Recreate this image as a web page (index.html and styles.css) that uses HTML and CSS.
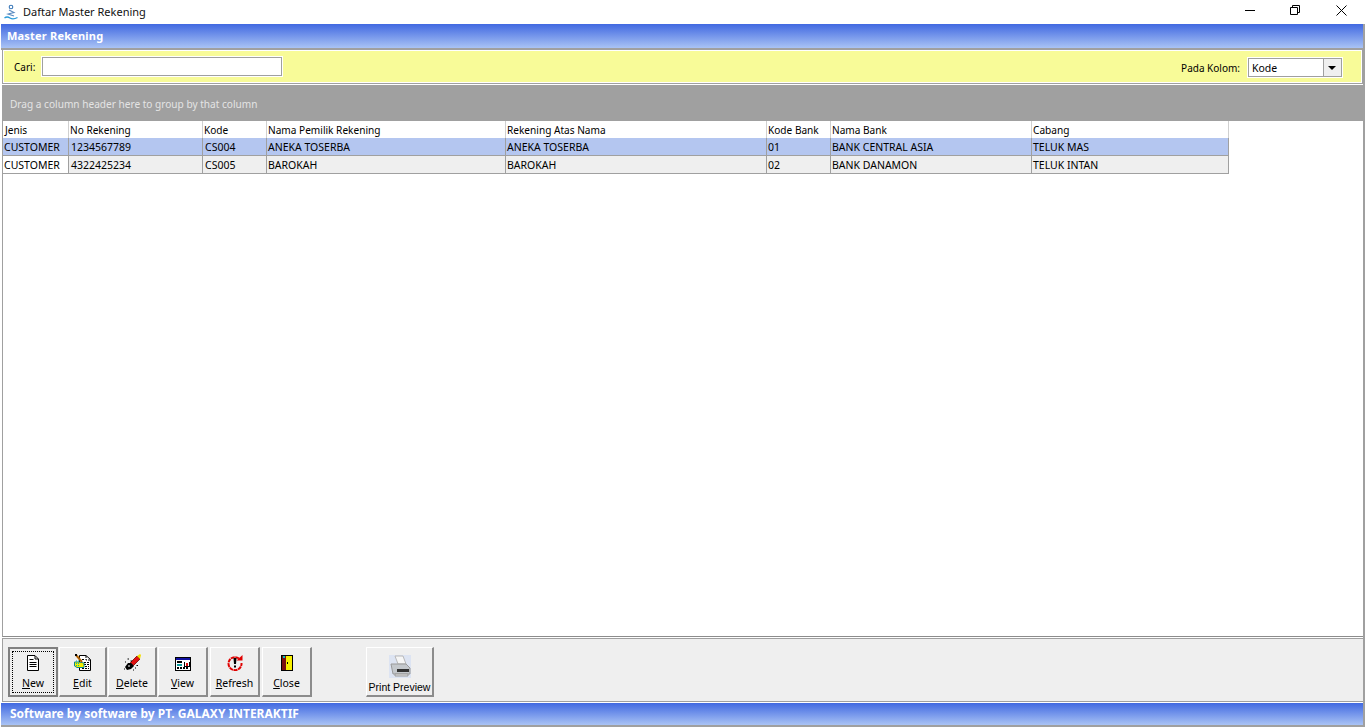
FILE: index.html
```html
<!DOCTYPE html>
<html lang="en">
<head>
    <meta charset="UTF-8">
    <title>Daftar Master Rekening</title>
    <link rel="stylesheet" href="styles.css">
</head>
<body>
    <div class="titlebar">
        <svg class="app-icon" width="16" height="16" viewBox="0 0 16 16" fill="none">
            <circle cx="8" cy="3" r="1.800" stroke="#3a78b8" stroke-width="1.100"/>
            <path d="M6 6 L11 8.500 L5 10 L11 12" stroke="#5a8ac0" stroke-width="1.100"/>
            <path d="M1.500 14 Q4 12 7 14 T14.500 13.500" stroke="#2a9ad8" stroke-width="1.300"/>
        </svg>
        <span class="title-text">Daftar Master Rekening</span>
        <div class="window-buttons">
            <svg width="11" height="11" viewBox="0 0 11 11"><path d="M0 5.500H10" stroke="#000"/></svg>
            <svg width="11" height="11" viewBox="0 0 11 11" fill="none"><path d="M2.500 2.500V0.500H9.500V7.500H7.500M0.500 2.500H7.500V9.500H0.500Z" stroke="#000"/></svg>
            <svg class="win-close" width="11" height="11" viewBox="0 0 11 11"><path d="M0.500 0.500L10.500 10.500M10.500 0.500L0.500 10.500" stroke="#000"/></svg>
        </div>
    </div>

    <div class="frame">
        <div class="banner banner-top">Master Rekening</div>

        <div class="search-panel">
            <label class="search-label">Cari:</label>
            <input class="search-input" type="text">
            <label class="column-label">Pada Kolom:</label>
            <div class="combo">
                <span class="combo-value">Kode</span>
                <span class="combo-arrow"></span>
            </div>
        </div>

        <div class="group-panel">Drag a column header here to group by that column</div>

        <div class="grid">
            <div class="row head">
                <div>Jenis</div><div>No Rekening</div><div>Kode</div><div>Nama Pemilik Rekening</div>
                <div>Rekening Atas Nama</div><div>Kode Bank</div><div>Nama Bank</div><div>Cabang</div>
            </div>
            <div class="row data selected">
                <div>CUSTOMER</div><div>1234567789</div><div>CS004</div><div>ANEKA TOSERBA</div>
                <div>ANEKA TOSERBA</div><div>01</div><div>BANK CENTRAL ASIA</div><div>TELUK MAS</div>
            </div>
            <div class="row data">
                <div class="first">CUSTOMER</div><div>4322425234</div><div>CS005</div><div>BAROKAH</div>
                <div>BAROKAH</div><div>02</div><div>BANK DANAMON</div><div>TELUK INTAN</div>
            </div>
        </div>

        <div class="toolbar">
            <button class="btn btn-new focused">
                <span class="focus-ring">
                    <svg width="14" height="16" viewBox="0 0 14 16"><path d="M1.500 0.500H9L12.500 4V15.500H1.500Z" fill="#fff" stroke="#000"/><path d="M9 1V4H12M3.500 4.500H7.500M3.500 7.500H10.500M3.500 9.500H10.500M3.500 11.500H10.500" fill="none" stroke="#000"/></svg>
                    <span><u>N</u>ew</span>
                </span>
            </button>
            <button class="btn btn-edit">
                <svg width="17" height="17" viewBox="0 0 17 17"><path d="M5.500 1.500H12L16.500 5.500V16.500H5.500Z" fill="#fff" stroke="#000"/><path d="M12 2V6H16M8 5.500H11M10 8.500H15M10 10.500H15M8 12.500H15M8 14.500H15" fill="none" stroke="#000" stroke-dasharray="2 1"/><path d="M0.500 8H5L10 9V13.500H3L0.500 12Z" fill="#f4f000" stroke="#0a8a8a"/><path d="M2 7H5M2 9.500H6M2 11.500H6" stroke="#00b0b0" stroke-dasharray="1 1"/><path d="M2 1L8 8" stroke="#b06000" stroke-width="2"/><path d="M1 0H3V2H1Z" fill="#000"/></svg>
                <span><u>E</u>dit</span>
            </button>
            <button class="btn btn-delete">
                <svg width="17" height="17" viewBox="0 0 17 17"><path d="M6.500 8.500L13 2L16 5L9.500 11.500Z" fill="#e01010" stroke="#700" stroke-width="0.800"/><path d="M13 2L16 0L17 1L16 5Z" fill="#f4e000"/><path d="M4 9H7L10 12L7 15L3 16L1 13Z" fill="#000"/><path d="M3.500 5H5M6.500 7H8M1 8H2M11 14H12M12.500 11.500H14M0 15H1M9 16H10" stroke="#000"/><path d="M4 12H6" stroke="#fff"/></svg>
                <span><u>D</u>elete</span>
            </button>
            <button class="btn btn-view">
                <svg width="16" height="14" viewBox="0 0 16 14" shape-rendering="crispEdges"><path d="M0.500 0.500H15.500V13.500H0.500Z" fill="#fff" stroke="#000"/><path d="M1 1H15V3H1Z" fill="#1010a0"/><path d="M2 4H7V6H2Z" fill="#000"/><path d="M2 7H7V9H2Z" fill="#0a9a9a"/><path d="M9.500 4.500V9.500H14.500V4.500" fill="none" stroke="#000"/><path d="M11 6H13V9H11Z" fill="#e01010"/><path d="M2 10.500H14M2 11.500H14" stroke="#000" stroke-dasharray="2 1"/></svg>
                <span><u>V</u>iew</span>
            </button>
            <button class="btn btn-refresh">
                <svg width="16" height="16" viewBox="0 0 16 16"><path d="M12 3.500A6.500 6.500 0 1 0 14.500 8" fill="none" stroke="#e00000" stroke-width="2" stroke-dasharray="4 0.600"/><path d="M9.500 5.500H15.500V0Z" fill="#e00000"/><path d="M6.500 3H9.500L9 9H7ZM7 10.500H9V12.500H7Z" fill="#000"/></svg>
                <span><u>R</u>efresh</span>
            </button>
            <button class="btn btn-close">
                <svg width="12" height="16" viewBox="0 0 12 16" shape-rendering="crispEdges"><path d="M0 0H12V16H0Z" fill="#000"/><path d="M5 1H11V15H5Z" fill="#f8f000"/><path d="M1 1H5V15H1Z" fill="#7a1010"/><path d="M2 1H4V3H2Z" fill="#00c0c0"/><path d="M6 7H7V9H6Z" fill="#000"/></svg>
                <span><u>C</u>lose</span>
            </button>
            <button class="btn btn-print">
                <svg width="24" height="24" viewBox="0 0 24 24"><path d="M1 1H23V24H1Z" fill="#dde4f2"/><path d="M7 2H15L18 10H10Z" fill="#f6f6f6" stroke="#b8b8b8"/><path d="M3 10H18L22 14V20H5Z" fill="#c4c8cc" stroke="#9a9a9a"/><path d="M9 15H21V18H9Z" fill="#333"/><path d="M7 20H20V22H7Z" fill="#e4e4e4" stroke="#999"/></svg>
                <span>Print Preview</span>
            </button>
        </div>

        <div class="banner banner-bottom">Software by software by PT. GALAXY INTERAKTIF</div>
    </div>
</body>
</html>
```

FILE: styles.css
```css
html, body {
    margin: 0;
    padding: 0;
    height: 728px;
    overflow: hidden;
    background: #fff;
    font-family: "Noto Sans", "Liberation Sans", sans-serif;
    font-size: 10.5px;
    color: #000;
}
.titlebar {
    height: 24px;
    display: flex;
    align-items: center;
    padding-left: 3px;
    font-size: 11px;
}
.app-icon { margin-right: 4px; }
.title-text { color: #111; margin-top: -1px; }
.window-buttons {
    margin-left: auto;
    display: flex;
    align-items: center;
    gap: 34px;
    padding-right: 19px;
    margin-top: -3px;
}
.win-close { margin-left: 1px; }
.frame {
    width: 1364px;
    height: 703px;
    margin-left: 1px;
    border-right: 2px solid #a0a0a0;
    border-bottom: 2px solid #a0a0a0;
    display: flex;
    flex-direction: column;
    box-sizing: border-box;
}
.banner {
    background: linear-gradient(#4169e1, #a9c3f5);
    color: #fff;
    font-weight: bold;
    flex: none;
}
.banner-top {
    height: 24px;
    line-height: 23px;
    padding-left: 6px;
    font-size: 11px;
    letter-spacing: 0.2px;
    border-bottom: 2px solid #a0a0a0;
    box-sizing: content-box;
}
.search-panel {
    height: 34px;
    margin-left: 1px;
    border: 1px solid #a0a0a0;
    border-top: 0;
    background: #f8fb98;
    box-shadow: inset 0 0 0 1px #fff;
    display: flex;
    align-items: center;
    padding: 0 20px 0 11px;
    flex: none;
    box-sizing: border-box;
    font-size: 10px;
}
.search-label { margin-right: 7px; }
.search-input {
    width: 240px;
    height: 19px;
    padding: 0;
    border: 1px solid #a0a0a0;
    outline: 1px solid #fff;
    background: #fff;
    box-sizing: border-box;
}
.column-label { margin-left: auto; margin-right: 8px; margin-top: 2px; }
.combo {
    width: 94px;
    height: 19px;
    margin-top: 2px;
    border: 1px solid #a0a0a0;
    outline: 1px solid #fff;
    background: #fff;
    display: flex;
    align-items: center;
    justify-content: space-between;
    padding-left: 3px;
    box-sizing: border-box;
    font-size: 10.5px;
}
.combo-arrow {
    width: 18px;
    height: 17px;
    background: #efefef;
    border-left: 1px solid #a0a0a0;
    position: relative;
    box-sizing: border-box;
}
.combo-arrow::after {
    content: "";
    position: absolute;
    left: 4px;
    top: 7px;
    border: 4px solid transparent;
    border-top: 4px solid #000;
    border-bottom: 0;
}
.group-panel {
    height: 36px;
    margin: 1px 0 0 1px;
    flex: none;
    background: #a0a0a0;
    color: #e4e4e4;
    font-size: 10.1px;
    line-height: 38px;
    padding-left: 8px;
    box-sizing: border-box;
}
.grid {
    flex: 1;
    min-height: 0;
    margin-left: 1px;
    border-left: 1px solid #a0a0a0;
    border-bottom: 1px solid #8c8c8c;
    background: #fff;
}
.row {
    display: grid;
    grid-template-columns: 66px 134px 64px 239px 261px 64px 201px 197px;
    width: 1226px;
}
.row > div {
    border-right: 1px solid #a0a0a0;
    padding-left: 1px;
    box-sizing: border-box;
    white-space: nowrap;
    overflow: hidden;
}
.row.head {
    height: 17px;
    line-height: 18px;
    font-size: 10.1px;
}
.row.head > div { border-right: 1px solid #d0d0d0; }
.row.head > div:first-child { padding-left: 2px; }
.row.data {
    height: 18px;
    line-height: 18px;
    background: #efefef;
    border-bottom: 1px solid #a0a0a0;
    box-sizing: border-box;
}
.row.data > div:nth-child(2), .row.data > div:nth-child(3) { padding-left: 2px; }
.row.data .first { background: #fff; }
.row.selected { background: #b4c6f0; }
.toolbar {
    height: 64px;
    margin: 1px 0 1px 1px;
    flex: none;
    background: #efefef;
    border: 1px solid #a0a0a0;
    border-right: 0;
    box-sizing: border-box;
    display: flex;
    padding: 8px 0 0 5px;
    align-items: flex-start;
}
.btn {
    width: 50px;
    height: 50px;
    padding: 0 0 5px;
    margin: 0 2px 0 0;
    font: inherit;
    background: #efefef;
    border-style: solid;
    border-width: 1px 2px 2px 1px;
    border-color: #fff #8c8c8c #8c8c8c #fff;
    display: flex;
    flex-direction: column;
    align-items: center;
    justify-content: flex-end;
    gap: 5px;
    box-sizing: border-box;
}
.btn.focused {
    border: 2px solid #808080;
    padding: 0;
    margin-right: 1px;
}
.focus-ring {
    flex: 1;
    align-self: stretch;
    margin: 2px;
    border: 1px dotted #000;
    display: flex;
    flex-direction: column;
    align-items: center;
    justify-content: flex-end;
    gap: 5px;
    padding-bottom: 2px;
}
.btn-edit { width: 48px; margin-right: 1px; }
.btn-delete { width: 49px; margin-right: 1px; }
.btn-close { margin-right: 54px; }
.btn-print {
    width: 68px;
    font-family: "Liberation Sans", sans-serif;
    font-size: 10.5px;
    white-space: nowrap;
    gap: 3px;
    padding-bottom: 2px;
}
.banner-bottom {
    height: 22px;
    line-height: 21px;
    padding-left: 9px;
    font-size: 12px;
}
```
